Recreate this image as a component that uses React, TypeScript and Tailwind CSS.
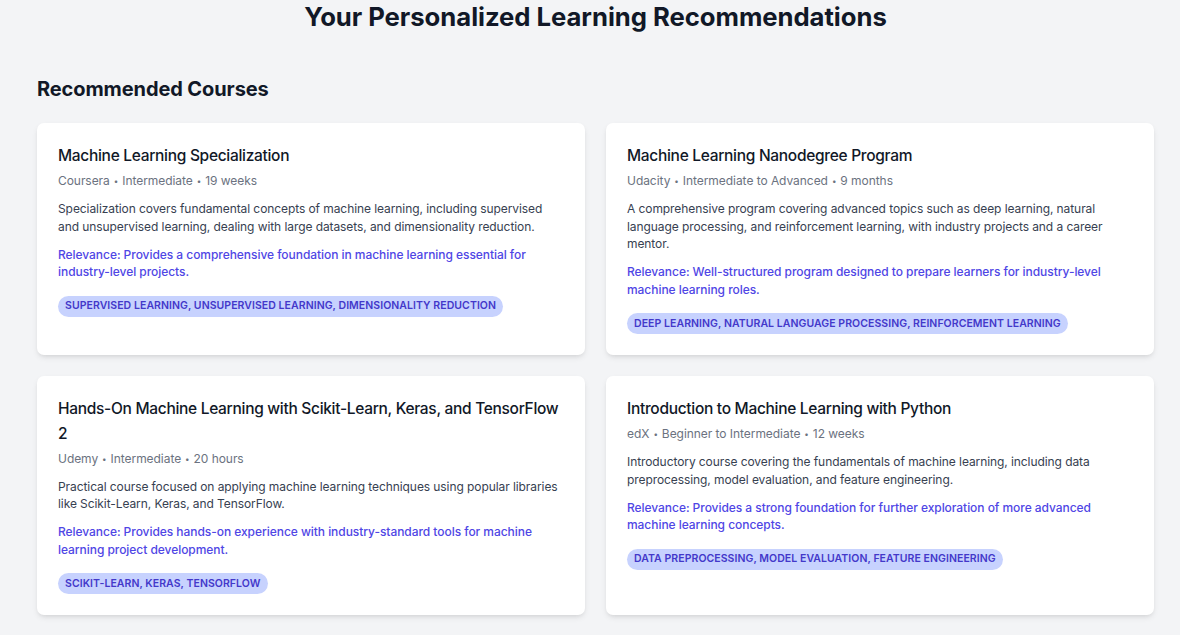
import React from "react";

type Course = {
  title: string;
  meta: string[];
  desc: string;
  relevance: string;
  tags: string;
};

const courses: Course[] = [
  {
    title: "Machine Learning Specialization",
    meta: ["Coursera", "Intermediate", "19 weeks"],
    desc: "Specialization covers fundamental concepts of machine learning, including supervised and unsupervised learning, dealing with large datasets, and dimensionality reduction.",
    relevance:
      "Relevance: Provides a comprehensive foundation in machine learning essential for industry-level projects.",
    tags: "Supervised Learning, Unsupervised Learning, Dimensionality Reduction",
  },
  {
    title: "Machine Learning Nanodegree Program",
    meta: ["Udacity", "Intermediate to Advanced", "9 months"],
    desc: "A comprehensive program covering advanced topics such as deep learning, natural language processing, and reinforcement learning, with industry projects and a career mentor.",
    relevance:
      "Relevance: Well-structured program designed to prepare learners for industry-level machine learning roles.",
    tags: "Deep Learning, Natural Language Processing, Reinforcement Learning",
  },
  {
    title: "Hands-On Machine Learning with Scikit-Learn, Keras, and TensorFlow 2",
    meta: ["Udemy", "Intermediate", "20 hours"],
    desc: "Practical course focused on applying machine learning techniques using popular libraries like Scikit-Learn, Keras, and TensorFlow.",
    relevance:
      "Relevance: Provides hands-on experience with industry-standard tools for machine learning project development.",
    tags: "Scikit-Learn, Keras, TensorFlow",
  },
  {
    title: "Introduction to Machine Learning with Python",
    meta: ["edX", "Beginner to Intermediate", "12 weeks"],
    desc: "Introductory course covering the fundamentals of machine learning, including data preprocessing, model evaluation, and feature engineering.",
    relevance:
      "Relevance: Provides a strong foundation for further exploration of more advanced machine learning concepts.",
    tags: "Data Preprocessing, Model Evaluation, Feature Engineering",
  },
];

function CourseCard({ c }: { c: Course }) {
  return (
    <div className="bg-white rounded-[7px] shadow-[0_3px_6px_-1px_rgba(0,0,0,0.1),0_2px_4px_-2px_rgba(0,0,0,0.08)] p-[21px]">
      <h3 className="text-[15.5px] leading-[24.5px] font-medium tracking-[-0.3px] text-[#111827]">
        {c.title}
      </h3>
      <p className="mt-[3.5px] h-[17.5px] text-[12px] leading-[17.5px] tracking-[-0.05px] text-[#6b7280]">
        {c.meta.map((m, i) => (
          <React.Fragment key={m}>
            {i > 0 && (
              <span className="mx-[4px] text-[8px] leading-none align-[1px]">{"\u2022"}</span>
            )}
            {m}
          </React.Fragment>
        ))}
      </p>
      <p className="mt-[10.5px] text-[12px] leading-[17.5px] tracking-[-0.08px] text-[#374151]">
        {c.desc}
      </p>
      <p className="mt-[10.5px] text-[12px] leading-[17.5px] font-medium tracking-[-0.05px] text-[#4f46e5]">
        {c.relevance}
      </p>
      <div className="mt-[15px] flex">
        <span className="rounded-full bg-[#c7d2fe] px-[7px] py-[3.5px] text-[10.5px] leading-[14px] font-semibold uppercase tracking-[0.06px] text-[#4338ca]">
          {c.tags}
        </span>
      </div>
    </div>
  );
}

export default function App() {
  return (
    <div
      className="min-h-[635px] bg-[#f3f4f6] pl-[37px] pr-[26px]"
      style={{ fontFamily: "Inter, 'Noto Sans', sans-serif" }}
    >
      <h1 className="pt-[1px] text-center text-[25.7px] leading-[32px] font-bold tracking-[-0.05px] text-[#111827]">
        Your Personalized Learning Recommendations
      </h1>
      <h2 className="mt-[42px] text-[20px] leading-[28px] font-bold tracking-[-0.1px] text-[#111827]">
        Recommended Courses
      </h2>
      <div className="mt-[20px] grid grid-cols-2 gap-[21px] pb-[20px]">
        {courses.map((c) => (
          <CourseCard key={c.title} c={c} />
        ))}
      </div>
    </div>
  );
}
